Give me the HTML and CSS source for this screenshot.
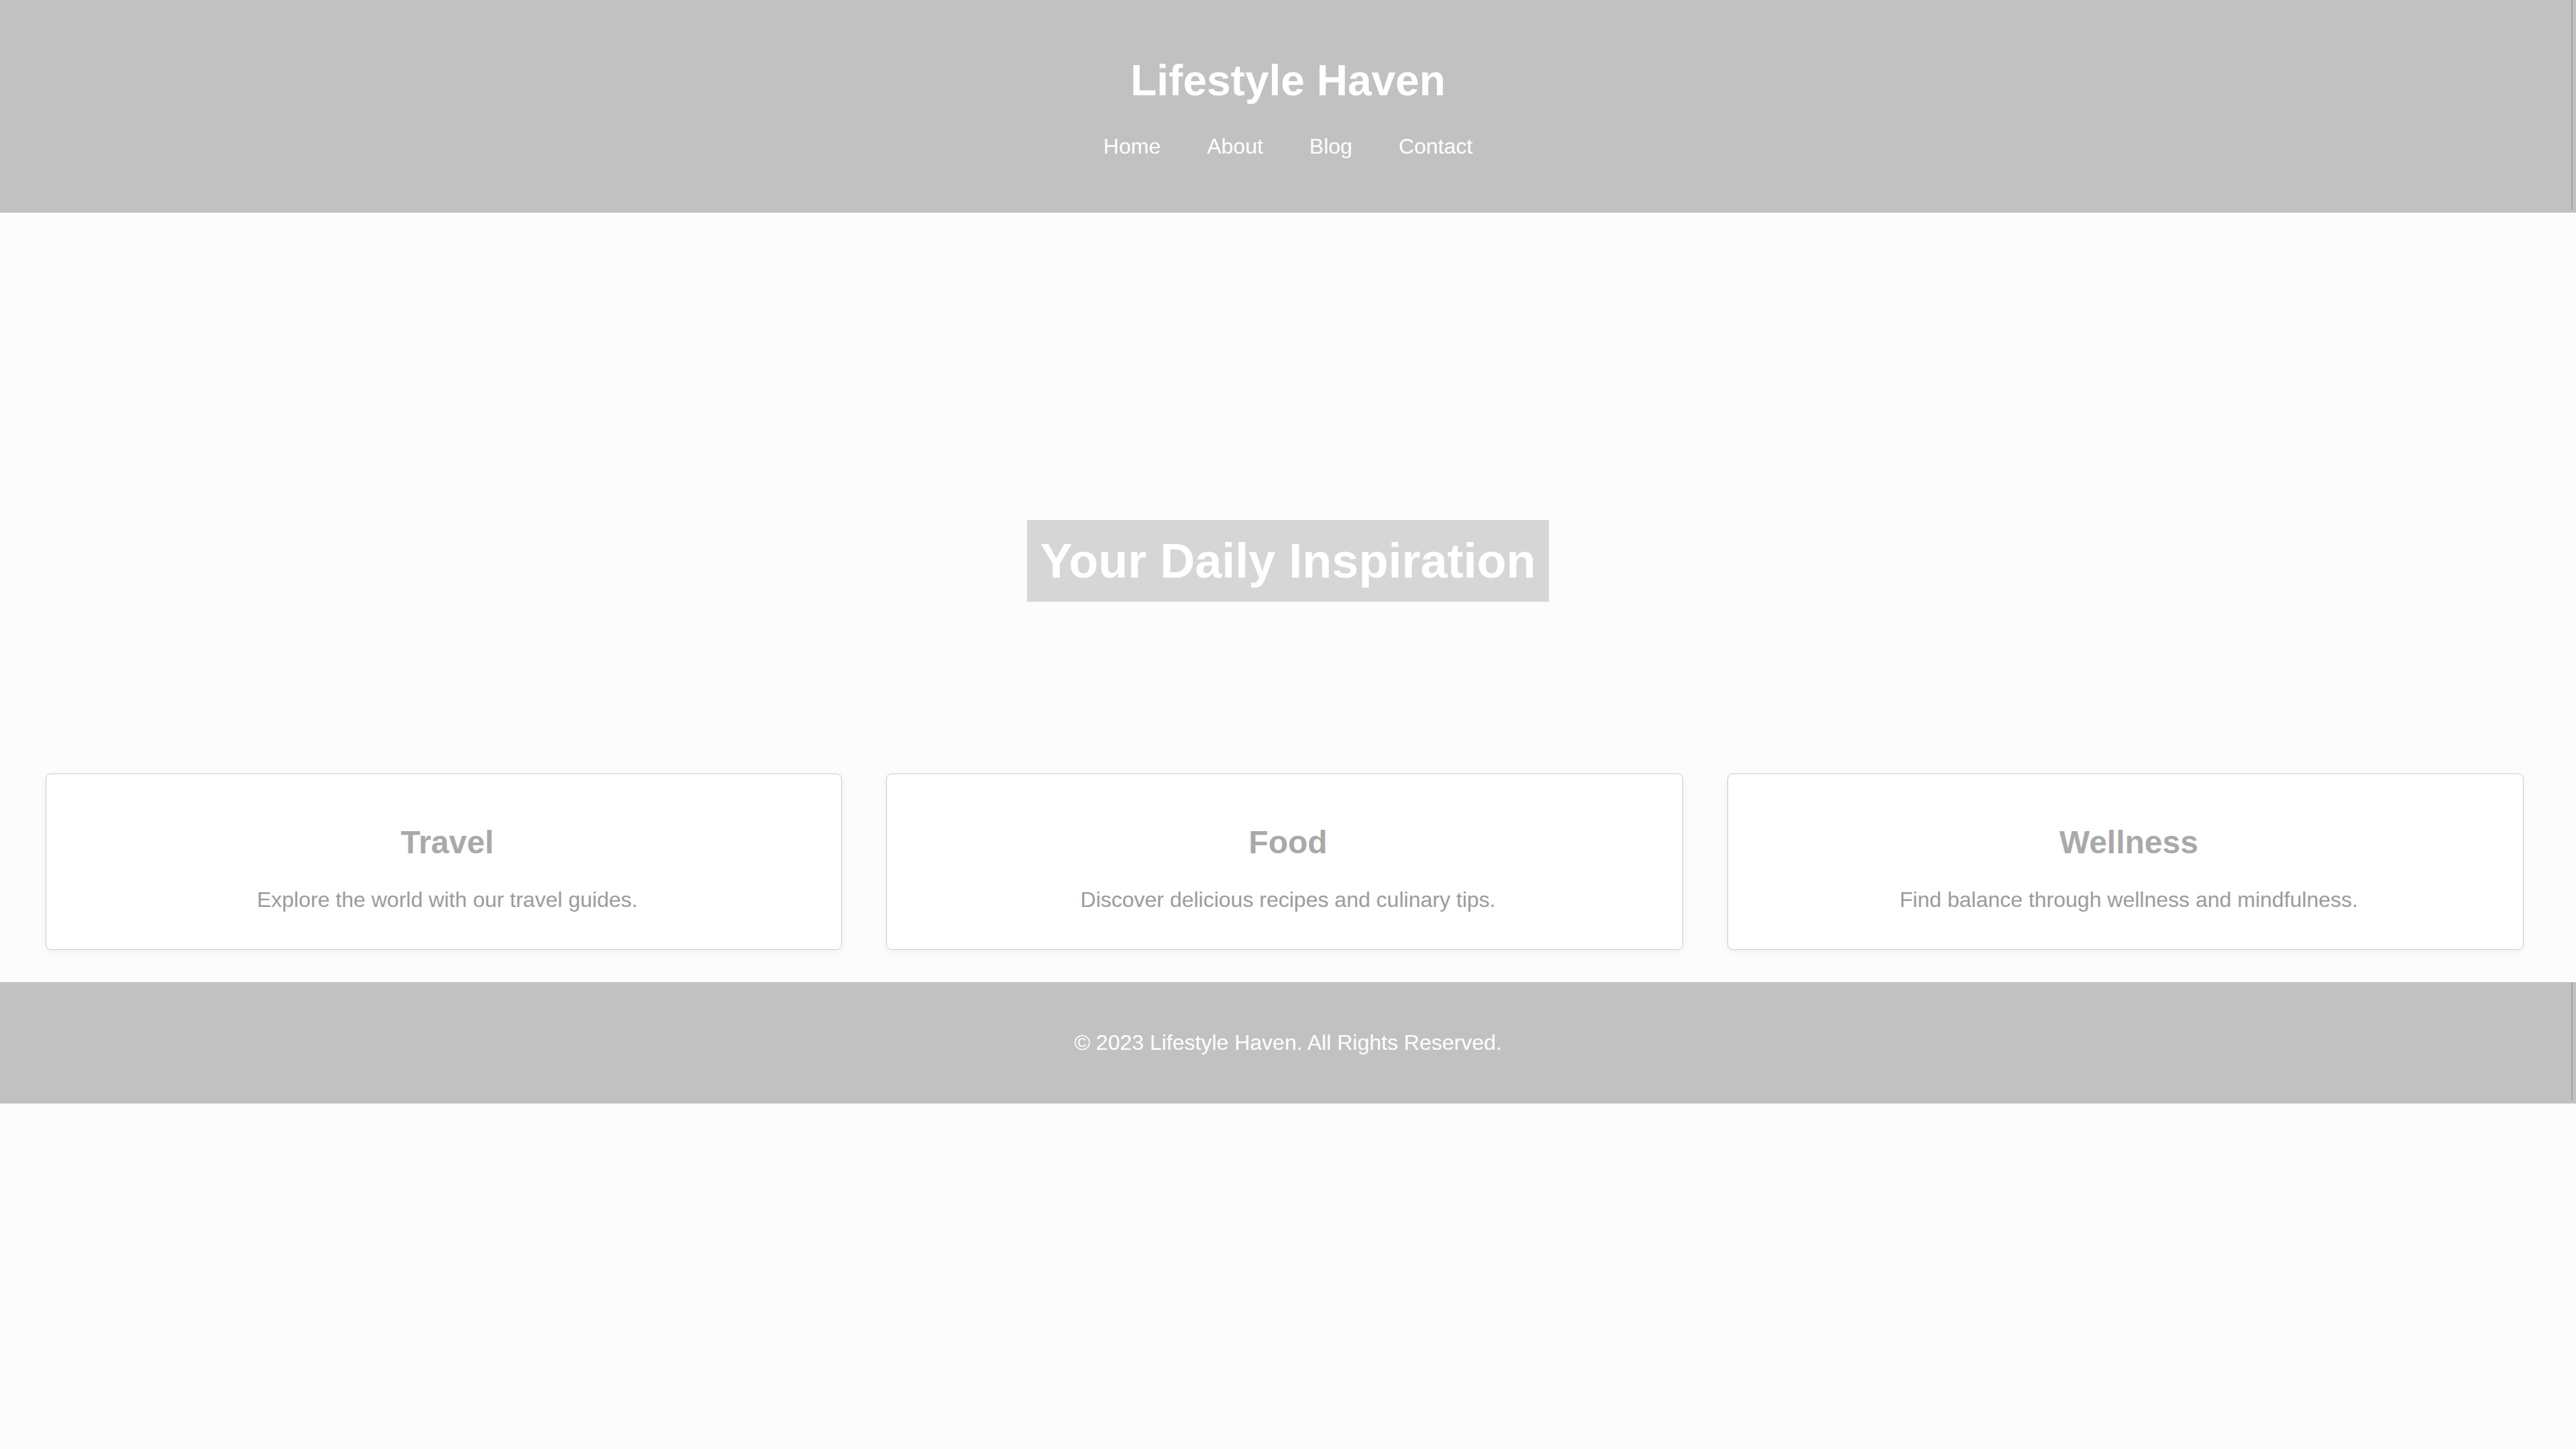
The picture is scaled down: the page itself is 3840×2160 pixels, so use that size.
FILE: index.html
```html
<!DOCTYPE html>
<html lang="en">
<head>
<meta charset="utf-8">
<title>Lifestyle Haven</title>
<link rel="stylesheet" href="styles.css">
</head>
<body>
<header class="site-header">
  <h1 class="site-title">Lifestyle Haven</h1>
  <nav class="site-nav">
    <a href="#" class="nav-link">Home</a>
    <a href="#" class="nav-link">About</a>
    <a href="#" class="nav-link">Blog</a>
    <a href="#" class="nav-link">Contact</a>
  </nav>
</header>
<section class="hero">
  <h2 class="hero-title">Your Daily Inspiration</h2>
</section>
<section class="cards">
  <article class="card">
    <h3 class="card-title">Travel</h3>
    <p class="card-text">Explore the world with our travel guides.</p>
  </article>
  <article class="card">
    <h3 class="card-title">Food</h3>
    <p class="card-text">Discover delicious recipes and culinary tips.</p>
  </article>
  <article class="card">
    <h3 class="card-title">Wellness</h3>
    <p class="card-text">Find balance through wellness and mindfulness.</p>
  </article>
</section>
<footer class="site-footer">
  <p class="footer-text">&copy; 2023 Lifestyle Haven. All Rights Reserved.</p>
</footer>
</body>
</html>
```

FILE: styles.css
```css
html, body {
  margin: 0;
  padding: 0;
}

body {
  background: #fcfcfc;
  font-family: "Liberation Sans", Arial, sans-serif;
  font-size: 32px;
  color: #999999;
}

.site-header {
  position: relative;
  background: #c1c1c1;
  padding: 83px 0 80px;
  text-align: center;
}

.site-header::after,
.site-footer::after {
  content: "";
  position: absolute;
  top: 0;
  bottom: 4px;
  right: 5px;
  width: 2px;
  background: #a6a6a6;
}

.site-title {
  margin: 0 0 43px;
  font-size: 64px;
  font-weight: bold;
  line-height: normal;
  color: #ffffff;
}

.site-nav {
  display: flex;
  justify-content: center;
  gap: 69px;
}

.nav-link {
  color: #ffffff;
  text-decoration: none;
  font-size: 32px;
  line-height: normal;
}

.hero {
  display: flex;
  justify-content: center;
  padding: 458px 0 256px;
}

.hero-title {
  margin: 0;
  padding: 20px 20px;
  background: #d6d6d6;
  color: #ffffff;
  font-size: 72px;
  font-weight: bold;
  line-height: normal;
}

.cards {
  display: grid;
  grid-template-columns: repeat(3, 1fr);
  gap: 66px;
  padding: 0 78px 48px 68px;
}

.card {
  background: #ffffff;
  border: 1px solid #cbcbcb;
  border-radius: 8px;
  box-shadow: 0 3px 10px rgba(0, 0, 0, 0.05);
  padding: 74px 27px 55px 37px;
  text-align: center;
}

.card-title {
  margin: 0 0 40px;
  font-size: 48px;
  font-weight: bold;
  line-height: normal;
  color: #a9a9a9;
}

.card-text {
  margin: 0;
  font-size: 32px;
  line-height: normal;
  color: #9b9b9b;
}

.site-footer {
  position: relative;
  background: #c1c1c1;
  padding: 72px 0;
  text-align: center;
}

.footer-text {
  margin: 0;
  font-size: 32px;
  line-height: normal;
  color: #ffffff;
}
```
